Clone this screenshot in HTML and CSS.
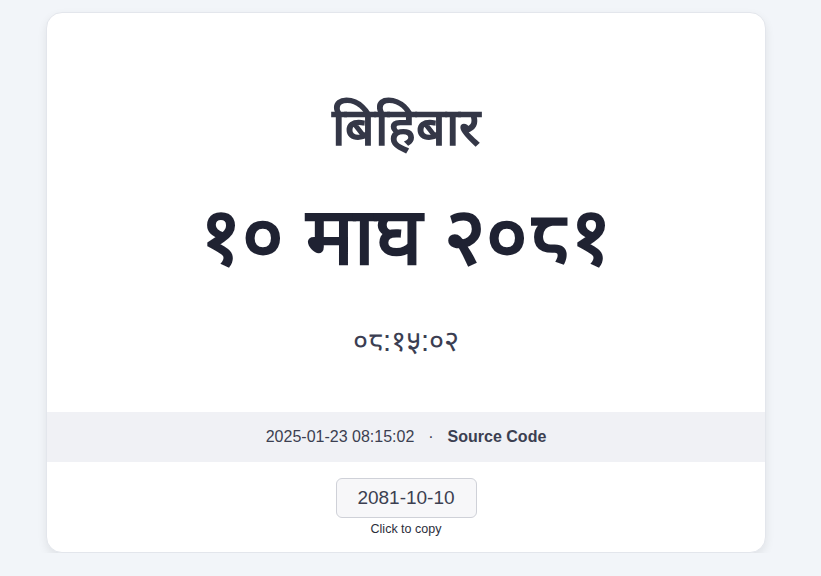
FILE: index.html
```html
<!DOCTYPE html>
<html lang="ne">
<head>
<meta charset="utf-8">
<title>Nepali Date</title>
<link rel="stylesheet" href="styles.css">
</head>
<body>
<main class="card">
  <section class="hero">
    <h2 class="weekday">बिहिबार</h2>
    <h1 class="date">१० माघ २०८१</h1>
    <p class="time">०८:१५:०२</p>
  </section>
  <div class="meta">
    <span>2025-01-23 08:15:02</span>
    <span class="dot">·</span>
    <a class="source" href="#">Source Code</a>
  </div>
  <div class="copy">
    <button class="copy-btn" type="button">2081-10-10</button>
    <span class="hint">Click to copy</span>
  </div>
</main>
</body>
</html>
```
FILE: styles.css
```css
html, body {
  margin: 0;
  padding: 0;
}
body {
  background: #f2f5f9;
  font-family: "Liberation Sans", Arial, sans-serif;
  padding: 12px 0 0 46px;
}
.card {
  width: 720px;
  height: 541px;
  box-sizing: border-box;
  background: #fff;
  border: 1px solid #e3e6ec;
  border-radius: 16px;
  box-shadow: 0 4px 10px rgba(0,0,0,0.08);
  overflow: hidden;
  display: flex;
  flex-direction: column;
}
.hero {
  flex: 1;
  display: flex;
  flex-direction: column;
  align-items: center;
  padding-top: 82px;
}
.weekday {
  margin: 0;
  font-size: 52px;
  font-weight: 700;
  color: #343747;
  line-height: 64px;
}
.date {
  margin: 30px 0 0;
  font-size: 80px;
  font-weight: 700;
  color: #1f2232;
  line-height: 96px;
}
.time {
  margin: 36px 0 0;
  font-size: 29px;
  color: #3b3e52;
  line-height: 40px;
}
.meta {
  height: 50px;
  background: #f0f1f5;
  display: flex;
  align-items: center;
  justify-content: center;
  gap: 14px;
  font-size: 16px;
  color: #3c3f51;
}
.source {
  font-weight: 700;
  color: #3c3f51;
  text-decoration: none;
}
.copy {
  height: 90px;
  display: flex;
  flex-direction: column;
  align-items: center;
  padding-top: 16px;
  box-sizing: border-box;
}
.copy-btn {
  font-family: "Liberation Sans", Arial, sans-serif;
  font-size: 19px;
  color: #3c3f51;
  background: #f7f7f9;
  border: 1px solid #cfd1d8;
  border-radius: 6px;
  width: 141px;
  height: 40px;
  padding: 0;
}
.hint {
  margin-top: 4px;
  font-size: 12.5px;
  color: #2b2d3a;
}
```
